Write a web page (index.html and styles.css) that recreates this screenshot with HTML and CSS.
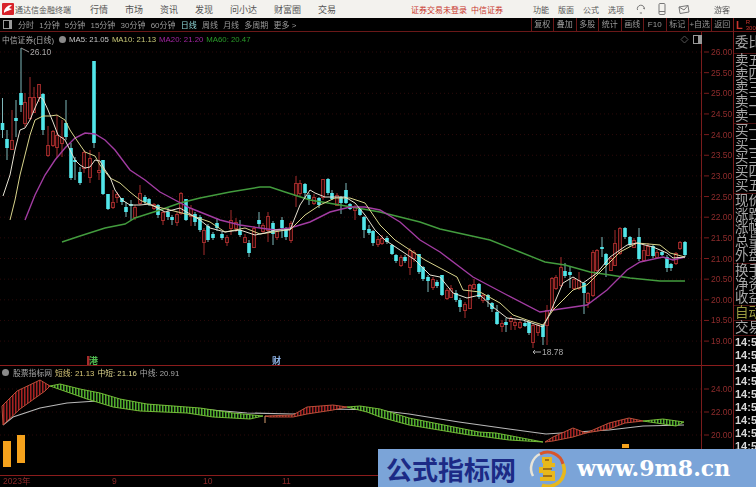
FILE: index.html
```html
<!DOCTYPE html>
<html lang="zh-CN">
<head>
    <meta charset="UTF-8">
    <link rel="stylesheet" href="styles.css">
    <title>通达信金融终端</title>
</head>
<body>

    <div class="topbar">
        <svg class="logo" width="12" height="12" viewBox="0 0 12 12">
            <rect width="12" height="12" rx="1" fill="#d8232a"/>
            <path d="M2 8 C4 3 7 2 10 2 L7 5 L10 6 C8 8 5 7 2 10 Z" fill="#fff"/>
        </svg>
        <span class="app-name">通达信金融终端</span>
        <nav class="menu">
            <span>行情</span><span>市场</span><span>资讯</span><span>发现</span><span>问小达</span><span>财富圈</span><span>交易</span>
        </nav>
        <span class="login">证券交易未登录</span>
        <span class="login broker">中信证券</span>
        <nav class="menu-right">
            <span>功能</span><span>版面</span><span>公式</span><span>选项</span>
        </nav>
        <div class="top-icons">
            <svg width="10" height="10" viewBox="0 0 10 10"><path d="M1.5 6 A3.6 3.6 0 1 1 8.5 5 M8.5 5 L7 3.8 M6 9 L3.8 9" fill="none" stroke="#777"/></svg>
            <svg width="8" height="12" viewBox="0 0 8 12"><rect x="1" y="0.5" width="6" height="11" rx="1" fill="none" stroke="#777"/><path d="M1 8.5 H7" stroke="#777"/></svg>
            <svg width="12" height="9" viewBox="0 0 12 9"><path d="M1 2 L10 0.5 L11 7 L2 8.5 Z M1 2 L6 5 L10 0.5" fill="none" stroke="#777"/></svg>
        </div>
        <span class="guest">游客</span>
    </div>

    <div class="workspace">
        <div class="left">
            <div class="toolbar">
                <span class="panel-btn"></span>
                <span class="period">分时</span>
                <span class="period">1分钟</span>
                <span class="period">5分钟</span>
                <span class="period">15分钟</span>
                <span class="period">30分钟</span>
                <span class="period">60分钟</span>
                <span class="period active">日线</span>
                <span class="period">周线</span>
                <span class="period">月线</span>
                <span class="period">多周期</span>
                <span class="period">更多 &gt;</span>
                <div class="tools">
                    <span>复权</span><span>叠加</span><span>多股</span><span>统计</span><span>画线</span><span>F10</span><span>标记</span><span>+自选</span><span>返回</span>
                </div>
            </div>

            <div class="pane main-pane">
                <div class="legend">
                    <span>中信证券(日线)</span>
                    <i class="dot"></i>
                    <span class="ma5">MA5: 21.05</span>
                    <span class="ma10">MA10: 21.13</span>
                    <span class="ma20">MA20: 21.20</span>
                    <span class="ma60">MA60: 20.47</span>
                </div>
                <div class="pane-icons">
                    <svg width="9" height="9" viewBox="0 0 9 9"><path d="M4.5 1 L8 4.5 L4.5 8 L1 4.5 Z" fill="none" stroke="#555"/></svg>
                    <svg width="9" height="9" viewBox="0 0 9 9"><rect x="0.5" y="0.5" width="8" height="8" fill="none" stroke="#999"/><rect x="5" y="1" width="3" height="7" fill="#999"/></svg>
                </div>
                <svg id="price-chart" width="733" height="334" viewBox="0 32 733 334"></svg>
            </div>

            <div class="pane sub-pane">
                <div class="legend">
                    <i class="dot"></i>
                    <span>股票指标网</span>
                    <span class="ind-short">短线: 21.13</span>
                    <span class="ind-mid">中短: 21.16</span>
                    <span>中线: 20.91</span>
                </div>
                <svg id="index-chart" width="733" height="109" viewBox="0 367 733 109"></svg>
            </div>

            <div class="dates">
                <span class="date-first">2023年</span>
                <span class="date-sep">9</span>
                <span class="date-oct">10</span>
                <span class="date-nov">11</span>
            </div>
        </div>

        <div class="quote">
            <div class="quote-head"><b>L</b><span class="quote-r">R<br>300</span></div>
            <div class="group first">
                <div>委比</div>
            </div>
            <div class="group">
                <div>卖五</div><div>卖四</div><div>卖三</div><div>卖二</div><div>卖一</div>
            </div>
            <div class="group">
                <div>买一</div><div>买二</div><div>买三</div><div>买四</div><div>买五</div>
            </div>
            <div class="group">
                <div>现价</div><div>涨跌</div><div>涨幅</div><div>总量</div><div>外盘</div>
            </div>
            <div class="group">
                <div>换手</div><div>净资</div><div>收益</div>
            </div>
            <div class="group auto">
                <div>自动</div>
            </div>
            <div class="group">
                <div>交易</div>
            </div>
            <div class="group times">
                <div>14:50</div><div>14:50</div><div>14:50</div><div>14:50</div><div>14:50</div><div>14:50</div><div>14:50</div><div>14:50</div><div>14:50</div>
            </div>
        </div>
    </div>

    <div class="watermark">
        <span class="wm-title">公式指标网</span>
        <svg class="wm-logo" width="38" height="38" viewBox="0 0 38 38">
            <path d="M5 27 A16 16 0 0 1 12 5" fill="none" stroke="#e8e4d8" stroke-width="2.5"/>
            <path d="M12 5 A16 16 0 0 1 35 15" fill="none" stroke="#d8552a" stroke-width="3"/>
            <path d="M35 15 A16 16 0 0 1 14 36" fill="none" stroke="#e8b81c" stroke-width="3.5"/>
            <path d="M14 8 H24 V14 H27 V18 H23 V22 H27 V32 H12 V28 H15 V24 H11 V18 H15 V14 H14 Z" fill="#e8b81c"/>
            <path d="M17 11 H21 M15 20 H24 M15 27 H24" stroke="#8a5a14" stroke-width="1.5"/>
        </svg>
        <span class="wm-url">www.9m8.cn</span>
    </div>

    <script src="chart.js"></script>
</body>
</html>
```

FILE: styles.css
```css
* {
    box-sizing: border-box;
}
html, body {
    margin: 0;
    height: 487px;
    overflow: hidden;
}
body {
    position: relative;
    width: 756px;
    background-color: #000;
    color: #a8a8a8;
    font-family: "Liberation Sans", "Noto Sans CJK SC", sans-serif;
    font-size: 8px;
    filter: blur(0.35px); /* capture un peu floue */
}

/* barre du haut */
.topbar {
    display: flex;
    align-items: center;
    height: 18px;
    padding-left: 2px;
    background-color: #f3f2ee;
    color: #555;
}
.logo {
    flex: none;
}
.app-name {
    margin-left: 1px;
    width: 75px;
    white-space: nowrap;
}
.menu {
    display: flex;
    gap: 17px;
    font-size: 9px;
}
.login {
    color: #c8342c;
    white-space: nowrap;
}
.menu + .login {
    margin-left: 75px;
}
.broker {
    margin-left: 4px;
}
.menu-right {
    display: flex;
    gap: 9px;
    margin-left: 30px;
}
.top-icons {
    display: flex;
    align-items: center;
    gap: 12px;
    margin-left: 12px;
}
.guest {
    margin-left: 24px;
}

.workspace {
    display: flex;
    height: 469px;
}
.left {
    width: 734px;
    border-right: 1px solid #7a1c1c;
}

/* periodes */
.toolbar {
    display: flex;
    align-items: center;
    height: 14px;
    border-bottom: 1px solid #6a1818;
    padding-left: 3px;
    color: #9a9a9a;
}
.panel-btn {
    width: 9px;
    height: 9px;
    margin-right: 6px;
    border: 1px solid #999;
    border-right-width: 3px;
}
.period {
    margin-right: 5.2px;
    white-space: nowrap;
}
.period.active {
    color: #8fd8d8;
}
.tools {
    display: flex;
    margin-left: auto;
    height: 13px;
}
.tools span {
    width: 22.5px;
    line-height: 13px;
    text-align: center;
    white-space: nowrap;
    border-left: 1px solid #6a1818;
}

.pane {
    position: relative;
}
.main-pane {
    height: 334px;
    border-bottom: 1px solid #8a1c1c;
}
.sub-pane {
    height: 110px;
    border-bottom: 1px solid #8a1c1c;
}
.pane svg {
    display: block;
}
.legend {
    position: absolute;
    top: 2px;
    left: 2px;
    display: flex;
    align-items: center;
    gap: 3px;
    height: 11px;
    font-size: 7.8px;
    white-space: nowrap;
}
.sub-pane .legend {
    top: 1px;
}
.dot {
    width: 7px;
    height: 7px;
    margin: 0 0 0 2px;
    border-radius: 50%;
    background-color: #8a8a8a;
}
.sub-pane .dot {
    margin-left: 0;
    margin-right: 1px;
}
.ma5 {
    color: #c8c8c8;
}
.ma10 {
    color: #c8c878;
}
.ma20 {
    color: #a226a2;
}
.ma60 {
    color: #2a9a2a;
}
.ind-short {
    color: #d8c878;
}
.ind-mid {
    color: #e0d890;
}
.pane-icons {
    position: absolute;
    top: 3px;
    left: 680px;
    display: flex;
    gap: 4px;
}

/* dates */
.dates {
    position: relative;
    height: 11px;
    color: #8a2a2a;
    font-size: 8.5px;
    line-height: 11px;
}
.dates span {
    position: absolute;
}
.date-first { left: 3px; }
.date-sep { left: 112px; }
.date-oct { left: 203px; }
.date-nov { left: 282px; }

/* panneau de cotation */
.quote {
    flex: 1;
    overflow: hidden;
    font-size: 13.5px;
    line-height: 13.8px;
    white-space: nowrap;
}
.quote-head {
    display: flex;
    align-items: center;
    height: 14px;
    gap: 3px;
    padding-left: 2px;
    border-bottom: 1px solid #6a1818;
    color: #c8342c;
}
.quote-head b {
    font-size: 11px;
    line-height: 12px;
}
.quote-r {
    font-size: 6px;
    line-height: 6px;
}
.group {
    padding: 0 0 0 1px;
    border-bottom: 1px solid #4a1212;
}
.group.first {
    padding-top: 4px;
    padding-bottom: 3px;
}
.group.auto {
    color: #9a9a40;
}
.times {
    border-bottom: 0;
    color: #d8d8d8;
    font-size: 11px;
    font-weight: bold;
    line-height: 13.1px;
}

/* filigrane */
.watermark {
    position: absolute;
    left: 378px;
    top: 449px;
    display: flex;
    align-items: center;
    width: 378px;
    height: 38px;
    padding-left: 8px;
    background-color: #7ba4d8;
}
.wm-title {
    color: #1c2a86;
    font-size: 26px;
    font-weight: bold;
    white-space: nowrap;
}
.wm-logo {
    flex: none;
    margin-left: 12px;
}
.wm-url {
    margin-left: 11px;
    color: #fff;
    font-family: "DejaVu Serif", serif;
    font-size: 22px;
    font-weight: bold;
    white-space: nowrap;
}
```

FILE: chart.js
```js
const SVG_NS = 'http://www.w3.org/2000/svg';

function add(parent, tag, attrs, text) {
    const el = document.createElementNS(SVG_NS, tag);
    for (const k in attrs) el.setAttribute(k, attrs[k]);
    if (text) el.textContent = text;
    parent.appendChild(el);
    return el;
}

function pts(list) {
    return list.map(p => p.join(',')).join(' ');
}

// x, haut, corps haut, corps bas, bas, couleur (c = baisse, r = hausse)
const candles = [
    [2.5,98,123,130,138,'c'],[7,130,139,148,160,'c'],[12,110,140,149,150,'r'],[16,100,118,121,137,'c'],
    [21,48,93,105,112,'c'],[25,93,102,123,127,'r'],[30,77,97,118,120,'r'],[34,87,97,112,113,'r'],
    [39,84,84,97,102,'r'],[43,93,94,130,135,'c'],[48,126,145,155,157,'r'],[53,130,131,145,147,'r'],
    [57,115,135,147,158,'r'],[62,120,137,143,157,'r'],[66,100,123,137,140,'c'],[71,143,148,178,180,'c'],
    [75,157,160,162,180,'c'],[80,167,172,183,185,'c'],[84,150,152,168,173,'r'],[90,150,158,177,183,'r'],
    [94,61,61,143,148,'c'],[99,152,170,172,180,'r'],[103,160,160,194,195,'c'],[108,194,194,209,210,'c'],
    [113,190,202,207,209,'r'],[117,192,194,197,203,'r'],[122,198,198,202,205,'c'],[126,202,207,212,217,'c'],
    [131,200,204,206,220,'c'],[135,205,207,217,220,'r'],[140,185,193,203,205,'r'],[145,195,197,202,204,'c'],
    [149,198,199,204,206,'c'],[154,203,204,208,210,'r'],[158,204,205,215,218,'c'],[163,210,212,220,225,'r'],
    [168,208,212,217,220,'c'],[172,215,217,220,225,'c'],[177,212,214,222,226,'r'],[181,192,193,213,215,'r'],
    [186,199,199,220,221,'c'],[191,205,208,216,226,'r'],[195,212,214,222,226,'c'],
    [200,215,217,230,232,'c'],[204,228,230,242,255,'r'],[208,224,226,240,242,'c'],[213,232,234,238,240,'c'],
    [217,218,223,228,231,'c'],[222,232,234,238,240,'c'],[227,235,237,242,246,'r'],[231,210,220,228,235,'r'],
    [236,218,222,228,232,'r'],[240,220,230,235,237,'c'],[245,234,237,242,243,'r'],[249,240,243,253,257,'c'],
    [254,226,228,247,248,'r'],[259,212,220,224,228,'c'],[263,223,225,231,234,'r'],[268,212,216,230,242,'r'],
    [273,221,223,234,245,'c'],[277,229,231,237,240,'r'],[282,217,220,228,238,'c'],[286,227,229,237,240,'c'],
    [291,221,223,240,243,'r'],[296,176,183,195,207,'r'],[300,180,183,193,197,'r'],[305,183,184,193,199,'c'],
    [309,193,195,199,205,'c'],[314,194,197,203,205,'r'],[319,197,198,205,208,'c'],[323,179,179,197,200,'r'],
    [328,178,179,193,195,'c'],[332,190,193,199,200,'c'],[337,193,195,205,206,'r'],[341,196,197,203,214,'c'],
    [346,183,190,203,204,'c'],[350,203,204,209,210,'c'],[355,205,207,210,220,'r'],[360,208,209,215,216,'c'],
    [364,216,217,230,238,'c'],[369,225,229,233,235,'c'],[373,230,231,243,246,'c'],[378,236,239,244,247,'r'],
    [382,235,238,243,245,'r'],[387,236,238,242,244,'c'],[392,244,245,254,255,'c'],[396,254,255,261,263,'c'],
    [401,255,257,265,267,'r'],[405,255,257,261,263,'c'],[410,248,250,267,275,'r'],[414,250,252,258,262,'r'],
    [419,254,254,272,274,'c'],[423,266,267,279,281,'c'],[428,275,277,281,292,'c'],[433,277,279,287,290,'r'],
    [437,280,282,286,288,'c'],
    [442,275,275,295,296,'c'],[447,288,290,298,300,'r'],[451,285,288,297,298,'r'],[456,290,293,300,302,'c'],
    [460,298,300,307,312,'c'],[465,302,304,310,318,'r'],[470,284,285,308,309,'r'],[474,279,284,288,290,'r'],
    [479,283,284,297,299,'c'],[483,293,295,300,303,'r'],[488,294,295,300,307,'c'],[492,302,303,309,312,'c'],
    [497,305,312,324,325,'c'],[502,320,323,326,332,'r'],[506,318,322,325,332,'c'],[511,316,318,321,330,'r'],
    [515,318,322,325,330,'r'],[520,320,322,327,329,'r'],[525,321,323,326,327,'c'],[529,321,322,333,335,'c'],
    [533,324,325,342,348,'r'],[538,324,325,332,336,'r'],[543,324,325,337,345,'c'],[547,305,310,325,345,'r'],
    [552,277,278,310,312,'r'],[556,275,277,288,290,'r'],[561,257,267,285,287,'r'],[565,263,271,276,278,'c'],
    [570,266,272,275,288,'c'],[574,277,279,288,290,'r'],[579,272,280,288,290,'r'],[584,282,283,293,314,'c'],
    [588,292,293,302,308,'r'],[593,250,252,295,297,'r'],[597,249,250,270,272,'r'],[602,237,247,249,257,'c'],
    [606,253,254,265,277,'c'],[611,257,258,270,271,'r'],[615,230,243,265,266,'r'],[620,227,228,253,255,'r'],
    [625,227,228,237,239,'c'],[630,236,237,245,247,'c'],[634,238,240,247,248,'r'],[639,228,237,259,261,'c'],
    [644,245,250,260,262,'r'],[648,243,246,255,256,'r'],[653,245,246,256,258,'c'],[657,250,252,257,258,'r'],
    [662,250,252,255,256,'c'],[667,255,257,268,272,'c'],[671,263,264,268,271,'c'],[676,252,253,263,265,'r'],
    [680,241,242,248,250,'r'],[685,241,242,255,257,'c']
];

const ma60 = [[62,242],[80,236],[105,228],[125,224],[135,218],[160,210],[180,203],[200,198],[230,192],[260,187],[270,187],[285,192],[310,200],[340,205],[380,212],[420,222],[440,229],[490,240],[520,252],[545,262],[565,265],[590,272],[610,275],[630,278],[660,281],[685,281]];
const ma20 = [[25,220],[35,195],[45,175],[55,160],[65,148],[75,138],[85,133],[95,134],[105,140],[115,150],[130,170],[145,180],[160,192],[175,200],[190,208],[200,212],[220,220],[240,225],[260,228],[275,230],[290,228],[310,222],[330,212],[350,207],[365,207],[380,210],[400,222],[420,240],[440,252],[473,277],[507,295],[540,312],[560,309],[587,305],[607,290],[627,270],[640,262],[663,257],[673,260],[685,257]];
const ma10 = [[10,220],[15,200],[20,175],[25,155],[30,135],[35,120],[43,116],[50,116],[57,115],[65,120],[70,130],[78,142],[85,152],[95,156],[100,165],[110,178],[120,183],[130,192],[140,200],[150,205],[170,210],[190,215],[210,222],[225,232],[245,228],[260,234],[280,231],[291,229],[305,215],[320,205],[335,198],[350,198],[365,203],[380,225],[395,240],[410,250],[425,260],[440,268],[457,277],[463,290],[480,292],[500,303],[513,315],[527,320],[543,325],[553,310],[573,290],[587,285],[607,265],[620,252],[637,243],[660,245],[670,253],[685,257]];
const ma5 = [[3,196],[10,175],[15,150],[20,130],[25,128],[30,120],[35,108],[40,97],[43,99],[48,110],[53,122],[58,135],[65,140],[70,150],[75,160],[80,165],[85,168],[90,167],[95,160],[100,161],[105,170],[110,177],[115,190],[122,200],[130,205],[140,205],[150,204],[165,212],[180,208],[200,220],[210,228],[225,232],[240,230],[255,235],[265,233],[275,230],[290,230],[300,205],[310,190],[315,193],[325,197],[335,197],[345,197],[355,203],[365,215],[375,230],[385,240],[400,250],[415,260],[430,275],[440,277],[453,293],[467,298],[480,295],[493,307],[507,318],[523,320],[543,327],[550,313],[563,283],[573,277],[583,283],[597,273],[610,257],[627,245],[637,243],[653,247],[667,253],[673,258],[685,257]];

const main = document.getElementById('price-chart');

// grille + axe des prix
for (let i = 0; i <= 14; i++) {
    const y = 52 + i * 20.65;
    add(main, 'line', { x1: 0, x2: 701, y1: y, y2: y, stroke: '#2c0a0a', 'stroke-dasharray': '1 3' });
    add(main, 'line', { x1: 704, x2: 709, y1: y, y2: y, stroke: '#7a1c1c' });
    add(main, 'text', { x: 711, y: y + 3, fill: '#8e2c2c', 'font-size': 8.5 }, (26 - i * 0.5).toFixed(2));
}
add(main, 'line', { x1: 701.5, x2: 701.5, y1: 32, y2: 366, stroke: '#7a1c1c' });

candles.forEach(([x, hi, top, bot, lo, c]) => {
    const color = c === 'c' ? '#52e6ea' : '#a52c2c';
    add(main, 'line', { x1: x, x2: x, y1: hi, y2: lo, stroke: c === 'c' ? '#7fb8ba' : color });
    if (c === 'c') {
        add(main, 'rect', { x: x - 1.8, y: top, width: 3.6, height: bot - top, fill: color });
    } else {
        add(main, 'rect', { x: x - 1.4, y: top + 0.5, width: 2.8, height: bot - top, fill: '#200606', stroke: color });
    }
});

[[ma60, '#439c3e', 1.4], [ma20, '#a23ca2', 1.4], [ma10, '#d8d48c', 1], [ma5, '#e6e2d2', 1]].forEach(([line, color, w]) => {
    add(main, 'polyline', { points: pts(line), fill: 'none', stroke: color, 'stroke-width': w });
});

// plus haut / plus bas
add(main, 'path', { d: 'M21 48 L29 52', stroke: '#999', fill: 'none' });
add(main, 'text', { x: 30, y: 55, fill: '#a8a8a8', 'font-size': 8.5 }, '26.10');
add(main, 'path', { d: 'M533 352 H541 M533 352 L535 350 M533 352 L535 354', stroke: '#aaa', fill: 'none' });
add(main, 'text', { x: 542, y: 355, fill: '#a8a8a8', 'font-size': 8.5 }, '18.78');

// reperes en bas du graphique
add(main, 'rect', { x: 87, y: 356, width: 2.5, height: 9, fill: '#a52c2c' });
add(main, 'text', { x: 89, y: 364, fill: '#4fb84f', 'font-size': 9, 'font-weight': 'bold' }, '港');
add(main, 'text', { x: 272, y: 364, fill: '#8fb4e8', 'font-size': 9, 'font-weight': 'bold' }, '财');

const sub = document.getElementById('index-chart');
const defs = add(sub, 'defs', {});
[['hatch-red', '#a82222'], ['hatch-green', '#4fae2c']].forEach(([id, on]) => {
    const p = add(defs, 'pattern', { id: id, width: 3, height: 3, patternUnits: 'userSpaceOnUse' });
    add(p, 'rect', { width: 3, height: 3, fill: '#080808' });
    add(p, 'rect', { width: 1.5, height: 3, fill: on });
});

[[24, 390], [22, 413], [20, 436]].forEach(([price, y]) => {
    add(sub, 'line', { x1: 0, x2: 701, y1: y, y2: y, stroke: '#2c0a0a', 'stroke-dasharray': '1 3' });
    add(sub, 'line', { x1: 704, x2: 709, y1: y, y2: y, stroke: '#7a1c1c' });
    add(sub, 'text', { x: 711, y: y + 3, fill: '#8e2c2c', 'font-size': 8.5 }, price.toFixed(2));
});
add(sub, 'line', { x1: 701.5, x2: 701.5, y1: 367, y2: 476, stroke: '#7a1c1c' });

// ligne blanche d'abord, les rubans passent dessus
const midLine = [[3,426],[13,418],[40,409],[67,404],[97,402],[107,402],[150,406],[200,410],[247,414],[293,415],[333,410],[376,411],[409,415],[459,423],[509,430],[546,435],[576,433],[609,431],[643,427],[684,426]];
add(sub, 'polyline', { points: pts(midLine), fill: 'none', stroke: '#b8b8b8', 'stroke-width': 1.1 });

// rubans : bord haut puis bord bas
const ribbons = [
    ['red', [[2,407],[17,392],[40,381],[50,387]], [[45,392],[20,410],[3,426]]],
    ['green', [[50,387],[60,385],[80,390],[100,394],[120,400],[147,405],[200,409],[233,414],[263,417]], [[250,420],[213,418],[187,414],[140,412],[113,408],[87,400],[70,394]]],
    ['red', [[265,417],[293,416],[307,408],[333,406],[347,408]], [[333,411],[307,415],[293,418],[270,418]]],
    ['green', [[347,408],[360,407],[380,410],[409,419],[469,431],[479,433],[496,434],[543,443]], [[509,441],[479,437],[469,436],[409,426],[380,418],[367,413]]],
    ['red', [[545,443],[553,438],[573,429],[586,434]], [[573,438],[553,442]]],
    ['red', [[586,434],[609,424],[629,419],[643,422]], [[625,424],[609,430]]],
    ['green', [[643,422],[663,420],[684,423]], [[676,427],[663,425]]]
];
ribbons.forEach(([kind, top, bottom]) => {
    add(sub, 'polygon', {
        points: pts(top.concat(bottom)),
        fill: 'url(#hatch-' + kind + ')',
        stroke: kind === 'red' ? '#c8563e' : '#7cc83c',
        'stroke-width': 0.9
    });
});

// volume orange
[[3, 442, 8, 26], [17, 436, 8, 28], [622, 445, 7, 4]].forEach(([x, y, w, h]) => {
    add(sub, 'rect', { x: x, y: y, width: w, height: h, fill: '#f5a21c' });
});
add(sub, 'line', { x1: 265, x2: 265, y1: 417, y2: 424, stroke: '#d8a070' });
```
